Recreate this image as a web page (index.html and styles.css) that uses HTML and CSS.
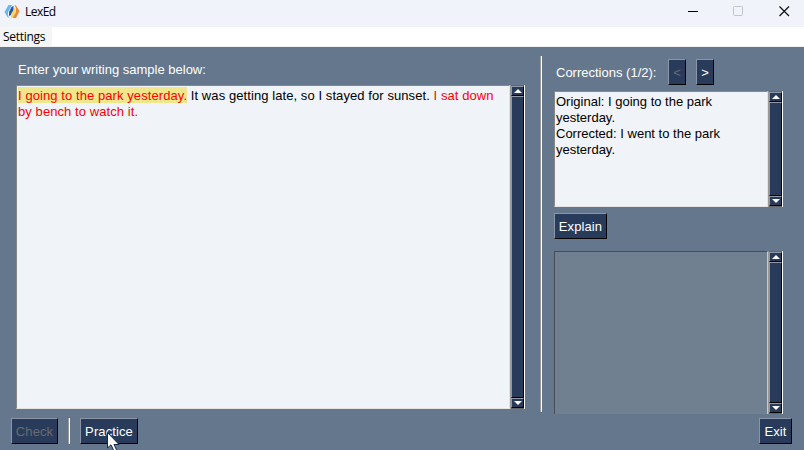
FILE: index.html
```html
<!DOCTYPE html>
<html lang="en">
<head>
<meta charset="utf-8">
<title>LexEd</title>
<link rel="stylesheet" href="styles.css">
</head>
<body>
<header class="titlebar">
  <svg class="logo" width="16" height="16" viewBox="0 0 16 16">
    <path d="M4.500 1H8L4 8V11L5 14L3.500 13L.5 8Z" fill="#69b5ef"/>
    <path d="M7.500 3L9.500 2V7L7 11L5 12V8Z" fill="#2459a5"/>
    <path d="M9.500 6L11.500 3V8L9 13L7 14V10Z" fill="#ffd45c"/>
    <path d="M10.500 1L12 1.500L15.500 7L12 14H8.500L12 8V4Z" fill="#e78b35"/>
  </svg>
  <span class="app-name">LexEd</span>
  <div class="window-controls">
    <svg width="110" height="27" viewBox="0 0 110 27" fill="none">
      <path d="M4 11.500H14" stroke="#000"/>
      <rect x="49.500" y="6.500" width="9" height="9" rx="1" stroke="#c3c5ca"/>
      <path d="M95.500 6.500L105 16M105 6.500L95.500 16" stroke="#111" stroke-width="1.200"/>
    </svg>
  </div>
</header>
<nav class="menubar"><span class="menu-item">Settings</span></nav>
<main class="content">
  <section class="editor">
    <div class="label">Enter your writing sample below:</div>
    <div class="field sample">
      <div class="text">
        <div class="line"><mark>I going to the park yesterday.</mark> <span>It was getting late, so I stayed for sunset.</span> <span class="error">I sat down</span></div>
        <div class="line error">by bench to watch it.</div>
      </div>
      <div class="scrollbar"><i class="arrow up"></i><i class="thumb"></i><i class="arrow down"></i></div>
    </div>
  </section>
  <div class="divider"></div>
  <section class="review">
    <div class="corrections-head">
      <span class="corrections-label">Corrections (1/2):</span>
      <button class="btn nav" disabled>&lt;</button>
      <button class="btn nav">&gt;</button>
    </div>
    <div class="field corrections">
      <div class="text">
        <div class="line">Original: I going to the park</div>
        <div class="line">yesterday.</div>
        <div class="line">Corrected: I went to the park</div>
        <div class="line">yesterday.</div>
      </div>
      <div class="scrollbar"><i class="arrow up"></i><i class="thumb"></i><i class="arrow down"></i></div>
    </div>
    <button class="btn explain">Explain</button>
    <div class="field explanation">
      <div class="text"></div>
      <div class="scrollbar"><i class="arrow up"></i><i class="thumb"></i><i class="arrow down"></i></div>
    </div>
  </section>
</main>
<footer class="actions">
  <button class="btn check" disabled>Check</button>
  <div class="divider short"></div>
  <button class="btn practice">Practice</button>
  <button class="btn exit">Exit</button>
</footer>
<svg class="cursor" width="13" height="20" viewBox="0 0 13 20"><path d="M.5 .5V16L4 12.800L7.500 20H10.500L7 12.500H12Z" fill="#fff" stroke="#18264a"/></svg>
</body>
</html>
```
FILE: styles.css
```css
* { box-sizing: border-box; }
body {
  margin: 0;
  width: 804px;
  height: 450px;
  overflow: hidden;
  background: #64778d;
  font: 13px/16px "Liberation Sans", Arial, sans-serif;
  color: #000;
  display: flex;
  flex-direction: column;
}
.titlebar {
  height: 27px;
  flex: none;
  display: flex;
  align-items: flex-start;
  background: #f0f3f9;
  font: 12px/16px "Open Sans", "Noto Sans", sans-serif;
  letter-spacing: -.55px;
}
.logo { margin: 4px 5px 0 4px; }
.app-name { margin-top: 4px; }
.window-controls { margin-left: auto; width: 120px; height: 27px; }
.menubar {
  height: 20px;
  flex: none;
  background: #fff;
  border-bottom: 1px solid #f0f0f0;
  font: 12px/19px "Open Sans", "Noto Sans", sans-serif;
  letter-spacing: -.3px;
}
.menu-item { display: block; width: 52px; height: 19px; padding-left: 3px; background: #f5f5f5; }
.content { height: 367px; flex: none; display: flex; }
.editor { width: 509px; flex: none; margin-left: 16px; }
.label { height: 38px; padding: 15px 0 0 2px; color: #fff; }
.field {
  display: flex;
  background: #f0f3f7;
}
.sample { height: 324px; }
.text {
  flex: 1;
  min-width: 0;
  padding: 2px 0 0 1px;
  border: 1px solid #888;
  border-right-color: #e3e3e3;
  border-bottom-color: #e3e3e3;
  white-space: nowrap;
}
.line { height: 16px; }
.sample .text { padding-top: 1px; }
.sample .line { letter-spacing: .08px; }
.sample .line:first-child { height: 17px; padding-top: 1px; }
mark { background: #f0e68c; color: #f00; padding-top: 1px; }
.error { color: #f00; }
.scrollbar {
  width: 15px;
  flex: none;
  padding: 1px 0;
  border: 1px solid #999;
  border-width: 0 1px 0 1px;
  border-right-color: #fff;
  background: #666;
  display: flex;
  flex-direction: column;
}
.arrow, .thumb {
  display: block;
  background: #283b5b;
  border: 1px solid #000;
  border-top-color: #9299a6;
  border-left-color: #9299a6;
}
.thumb { flex: 1; }
.arrow { height: 10px; display: flex; align-items: center; justify-content: center; }
.arrow::before { content: ""; border: 4px solid transparent; }
.up::before { border-top: 0; border-bottom-color: #fff; }
.down::before { border-bottom: 0; border-top-color: #fff; }
.divider {
  width: 2px;
  flex: none;
  height: 356px;
  margin: 9px 12px 0 15px;
  border-left: 1px solid #999;
  border-right: 1px solid #fff;
}
.review { width: 229px; }
.corrections-head { height: 44px; padding: 12px 0 0 2px; display: flex; align-items: flex-start; color: #fff; }
.corrections-label { width: 112px; padding-top: 6px; white-space: nowrap; }
.btn {
  height: 26px;
  padding: 1px 0 0;
  border: 1px solid #000;
  border-top-color: #8b95a7;
  border-left-color: #8b95a7;
  background: #283b5b;
  color: #fff;
  font: inherit;
  letter-spacing: .1px;
  display: block;
}
.btn:disabled { color: #6b6b6d; }
.nav { width: 18px; margin-right: 10px; }
.corrections { height: 116px; }
.explain { width: 53px; margin: 6px 0 12px; }
.explanation { height: 163px; background: #708090; }
.explanation .text { border-color: #464d57; border-bottom: 0; border-right-color: #c6ccd3; }
.actions { flex: none; display: flex; padding: 4px 12px 0 11px; }
.check { width: 47px; }
.divider.short { height: 26px; margin: 0 10px; }
.practice { width: 58px; }
.exit { width: 33px; margin-left: auto; }
.cursor { position: absolute; left: 107px; top: 432px; }
```
